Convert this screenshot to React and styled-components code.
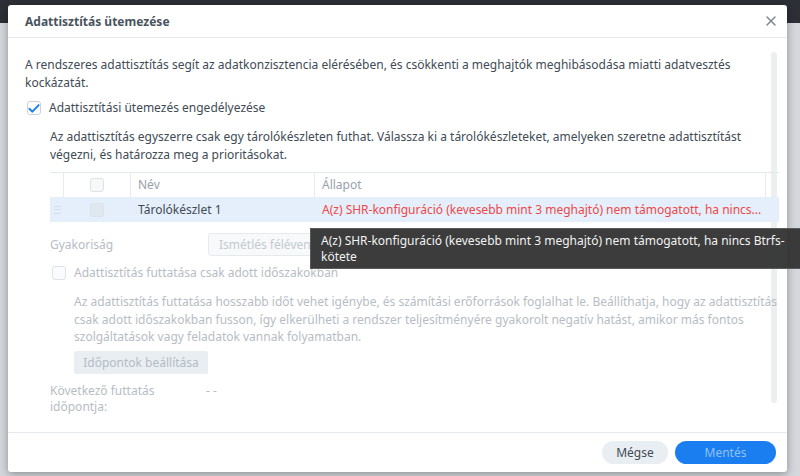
import React from "react"
import styled, { createGlobalStyle } from "styled-components"
import { X } from "lucide-react"

const GlobalStyle = createGlobalStyle`
  html, body {
    margin: 0;
    padding: 0;
    height: 476px;
    overflow: hidden;
  }
  body {
    background: linear-gradient(#2c3036 0 23px, #d4d8dc 23px);
    font-family: "Noto Sans", "DejaVu Sans", sans-serif;
    font-size: 12px;
    color: #414b55;
  }
`

const Dialog = styled.div`
  position: relative;
  margin: 5px 0 0 8px;
  width: 779px;
  height: 467px;
  background: #fff;
  border-radius: 3px;
  box-shadow: 0 2px 8px rgba(0, 0, 0, 0.35);
  display: flex;
  flex-direction: column;
`

const Header = styled.div`
  height: 32px;
  flex: none;
  display: flex;
  align-items: center;
  justify-content: space-between;
  padding: 0 6px 0 17px;
  border-bottom: 1px solid #e6eaee;
`

const Title = styled.div`
  font-weight: 700;
  font-size: 12px;
  color: #4a545e;
`

const Close = styled.div`
  width: 20px;
  height: 20px;
  display: flex;
  align-items: center;
  justify-content: center;
  color: #7c8792;
`

const Body = styled.div`
  position: relative;
  flex: 1;
  padding: 18px 8px 0 17px;
  line-height: 17.5px;
`

const ScrollTrack = styled.div`
  position: absolute;
  right: 10px;
  top: 14px;
  width: 6px;
  height: 351px;
  border-radius: 3px;
  background: #eceef0;
`

const Para = styled.p`
  position: relative;
  margin: ${p => p.$mt || 0}px 0 0 ${p => p.$ml || 0}px;
  white-space: nowrap;
  color: ${p => (p.$muted ? "#b6bdc4" : "#414b55")};
`

const CheckRow = styled.label`
  position: relative;
  display: flex;
  align-items: center;
  gap: 8px;
  height: 16px;
  margin: ${p => p.$mt}px 0 0 ${p => p.$ml}px;
  color: ${p => (p.$muted ? "#b6bdc4" : "#414b55")};
`

const Box = styled.span`
  box-sizing: border-box;
  width: 14px;
  height: 14px;
  flex: none;
  border: 1px solid ${p => (p.$muted ? "#dce2e8" : "#c9d1d9")};
  border-radius: 3px;
  background: ${p => p.$fill || "#fff"};
  display: flex;
  align-items: center;
  justify-content: center;
`

const Section = styled.div`
  position: relative;
  margin-left: 25px;
`

const Table = styled.div`
  margin-top: 9px;
  border-top: 1px solid #e3e8ee;
`

const TRow = styled.div`
  display: grid;
  grid-template-columns: 13px 67px 184px 451px 14px;
  height: ${p => p.$h}px;
  background: ${p => p.$bg || "transparent"};
  align-items: center;
`

const Cell = styled.div`
  height: 100%;
  display: flex;
  align-items: center;
  justify-content: ${p => (p.$center ? "center" : "flex-start")};
  padding-left: ${p => p.$pl || 0}px;
  border-left: ${p => (p.$line ? "1px solid #e8ecf0" : "none")};
  color: ${p => p.$color || "#414b55"};
  overflow: hidden;
  white-space: nowrap;
  min-width: 0;
`

const Ellipsis = styled.span`
  overflow: hidden;
  text-overflow: ellipsis;
  white-space: nowrap;
`

const Grip = styled.span`
  width: 7px;
  height: 6px;
  margin-left: 4px;
  border-top: 1px solid #d4dee8;
  border-bottom: 1px solid #d4dee8;
  position: relative;
  &::after {
    content: "";
    position: absolute;
    left: 0;
    right: 0;
    top: 2px;
    border-top: 1px solid #d4dee8;
  }
`

const FieldRow = styled.div`
  display: flex;
  align-items: center;
  margin-top: ${p => p.$mt}px;
  color: #b6bdc4;
`

const FieldLabel = styled.div`
  width: 158px;
  flex: none;
`

const Select = styled.div`
  box-sizing: border-box;
  width: 220px;
  height: 23px;
  border: 1px solid #e6eaee;
  border-radius: 3px;
  background: #f7f9fa;
  padding-left: 10px;
  display: flex;
  align-items: center;
  color: #c4cad0;
`

const Button = styled.button`
  box-sizing: border-box;
  height: 23px;
  border: none;
  font-family: inherit;
  font-size: 12px;
  padding: 0;
  width: ${p => p.$w}px;
  border-radius: ${p => (p.$pill ? "12px" : "2px")};
  background: ${p => p.$bg};
  color: ${p => p.$color};
  margin: ${p => p.$m || 0};
`

const NextRun = styled.div`
  display: flex;
  margin-top: 9px;
  color: #b6bdc4;
  line-height: 16.5px;
`

const NextLabel = styled.div`
  width: 156px;
  flex: none;
`

const Footer = styled.div`
  height: 39px;
  flex: none;
  border-top: 1px solid #e6eaf0;
  display: flex;
  align-items: center;
  justify-content: flex-end;
  gap: 7px;
  padding-right: 11px;
`

const Tooltip = styled.div`
  position: absolute;
  left: 302px;
  top: 223px;
  width: 500px;
  box-sizing: border-box;
  padding: 4px 10px 3px;
  background: rgba(50, 50, 50, 0.95);
  border: 1px solid #5a5a5a;
  color: #f2f2f2;
  line-height: 16px;
  white-space: nowrap;
`

const Check = () => (
  <svg width="13" height="11" viewBox="0 0 13 11">
    <path d="M1.5 5.8 L4.8 9 L11.5 1.8" fill="none" stroke="#1a7ef0" strokeWidth="2" strokeLinecap="round" strokeLinejoin="round" />
  </svg>
)

export default function App() {
  return (
    <>
      <GlobalStyle />
      <Dialog>
        <Header>
          <Title>Adattisztítás ütemezése</Title>
          <Close>
            <X size={16} strokeWidth={2.2} />
          </Close>
        </Header>
        <Body>
          <ScrollTrack />
          <Para>
            A rendszeres adattisztítás segít az adatkonzisztencia elérésében, és csökkenti a meghajtók meghibásodása miatti adatvesztés
            <br />
            kockázatát.
          </Para>
          <CheckRow $mt={9} $ml={2}>
            <Box>
              <Check />
            </Box>
            Adattisztítási ütemezés engedélyezése
          </CheckRow>
          <Section>
            <Para $mt={12}>
              Az adattisztítás egyszerre csak egy tárolókészleten futhat. Válassza ki a tárolókészleteket, amelyeken szeretne adattisztítást
              <br />
              végezni, és határozza meg a prioritásokat.
            </Para>
            <Table>
              <TRow $h={24}>
                <Cell />
                <Cell $line $center>
                  <Box $muted $fill="#f6f8fa" />
                </Cell>
                <Cell $line $pl={7} $color="#98a1aa">Név</Cell>
                <Cell $line $pl={7} $color="#98a1aa">Állapot</Cell>
                <Cell $line />
              </TRow>
              <TRow $h={25} $bg="#e4effb">
                <Cell>
                  <Grip />
                </Cell>
                <Cell $center>
                  <Box $muted $fill="#dfe7ef" />
                </Cell>
                <Cell $pl={8}>Tárolókészlet 1</Cell>
                <Cell $pl={8} $color="#ee4848">
                  <Ellipsis>A(z) SHR-konfiguráció (kevesebb mint 3 meghajtó) nem támogatott, ha nincs...</Ellipsis>
                </Cell>
                <Cell />
              </TRow>
            </Table>
            <FieldRow $mt={11}>
              <FieldLabel>Gyakoriság</FieldLabel>
              <Select>Ismétlés félévente</Select>
            </FieldRow>
            <CheckRow $mt={9} $ml={2} $muted>
              <Box $muted $fill="#fafbfc" />
              Adattisztítás futtatása csak adott időszakokban
            </CheckRow>
            <Para $mt={12} $ml={24} $muted>
              Az adattisztítás futtatása hosszabb időt vehet igénybe, és számítási erőforrások foglalhat le. Beállíthatja, hogy az adattisztítás
              <br />
              csak adott időszakokban fusson, így elkerülheti a rendszer teljesítményére gyakorolt negatív hatást, amikor más fontos
              <br />
              szolgáltatások vagy feladatok vannak folyamatban.
            </Para>
            <Button $w={134} $bg="#e9eef3" $color="#b4bcc4" $m="5px 0 0 24px">
              Időpontok beállítása
            </Button>
            <NextRun>
              <NextLabel>
                Következő futtatás
                <br />
                időpontja:
              </NextLabel>
              <div>- -</div>
            </NextRun>
          </Section>
        </Body>
        <Footer>
          <Button $pill $w={66} $bg="#e9eef3" $color="#414b55">
            Mégse
          </Button>
          <Button $pill $w={101} $bg="#1a7ef0" $color="#8fc2f8">
            Mentés
          </Button>
        </Footer>
        <Tooltip>
          A(z) SHR-konfiguráció (kevesebb mint 3 meghajtó) nem támogatott, ha nincs Btrfs-
          <br />
          kötete
        </Tooltip>
      </Dialog>
    </>
  )
}
